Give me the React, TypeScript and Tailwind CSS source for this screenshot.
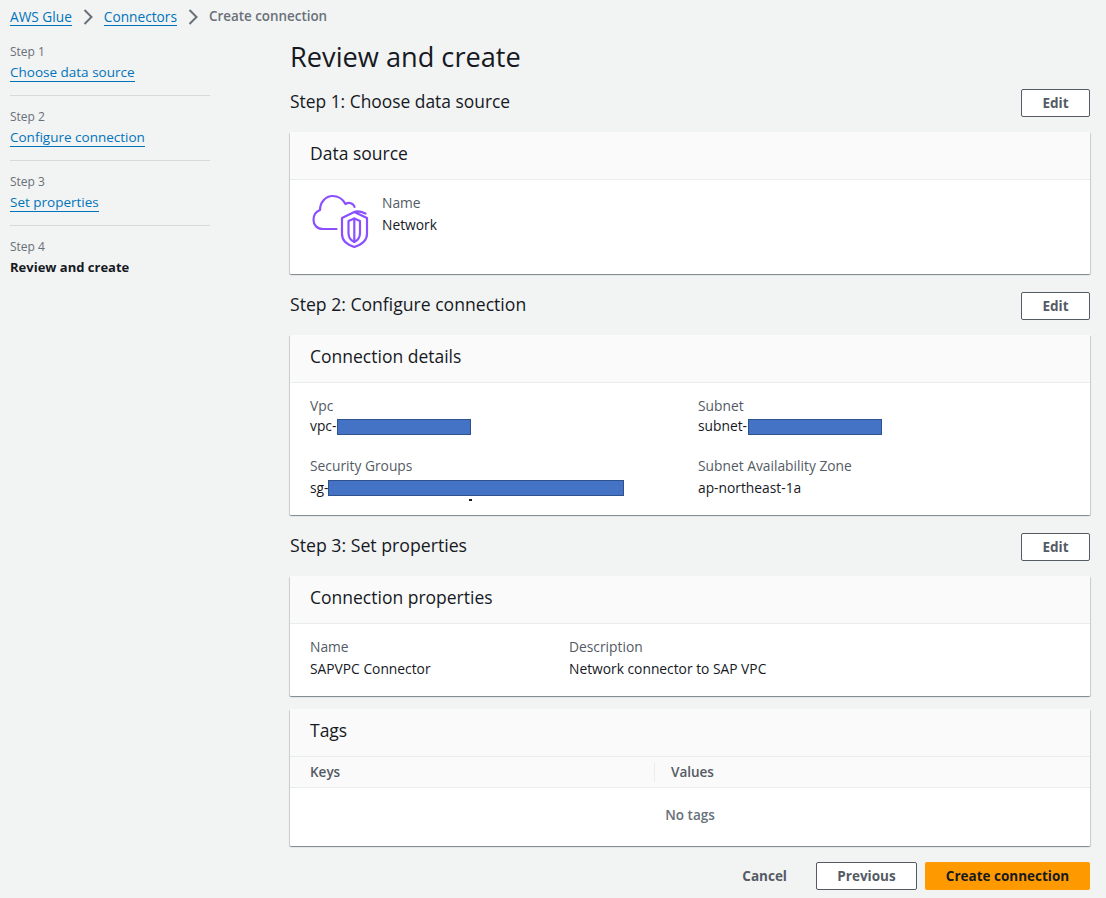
import React from 'react';

const steps = [
    { label: 'Step 1', title: 'Choose data source' },
    { label: 'Step 2', title: 'Configure connection' },
    { label: 'Step 3', title: 'Set properties' },
];

const Card: React.FC<{ title: string; children: React.ReactNode; className?: string }> = ({ title, children, className }) => (
    <div className={`bg-white rounded-[1px] shadow-[0_1px_1px_0_rgba(0,28,36,0.3),1px_1px_1px_0_rgba(0,28,36,0.15),-1px_1px_1px_0_rgba(0,28,36,0.15)] ${className}`}>
        <div className="h-12 flex items-center px-5 pb-[4px] bg-[#fafafa] border-b border-[#eaeded] text-[17.5px] text-[#16191f]">{title}</div>
        {children}
    </div>
);

const SectionHead: React.FC<{ title: string; className?: string }> = ({ title, className }) => (
    <div className="h-7 flex items-center justify-between">
        <h2 className={`text-[#16191f] pb-[3px] ${className}`}>{title}</h2>
        <button className="w-[69px] h-7 bg-white border border-[#545b64] rounded-[2px] text-[13.500px] font-bold text-[#545b64]">Edit</button>
    </div>
);

const Field: React.FC<{ label: string; value: string; mask?: number; maskClass?: string; className?: string }> = ({ label, value, mask, maskClass, className }) => (
    <div className={className}>
        <div className="text-[13.800px] leading-[20px] text-[#545b64]">{label}</div>
        <div className="text-[13.800px] leading-[20px] text-[#16191f] flex items-center">
            {value}
            {mask && <span className={`h-[16px] bg-[#4472c4] border border-[#2f528f] ${maskClass}`} style={{ width: mask }} />}
        </div>
    </div>
);

const Chevron = () => (
    <svg width="10" height="16" viewBox="0 0 10 16" fill="none" stroke="#687078" strokeWidth="2" className="mx-[11px]">
        <path d="M1.500 1L8.500 8L1.500 15" />
    </svg>
);

const NetworkIcon = () => (
    <svg width="60" height="60" viewBox="0 0 60 60" fill="none" stroke="#8c4fff" strokeWidth="2.200" strokeLinecap="round" strokeLinejoin="round" className="-ml-[1px] -mt-[1px]">
        <path d="M27.500 41H14C8 41 4.500 37 4.500 32C4.500 27 7 23.500 11 22C11 14 17 8 23.500 8C29 8 34 11.500 36.500 16C39 14.500 42 15 44 16.500C45 17.500 45.500 18.500 45.500 19" />
        <path d="M56.500 25.500C52 23.500 48 23 45.300 24L33 30V46C33 53 39 57 45.300 59C51.500 57 58 53 58 46V30L45.300 24" />
        <path d="M39.500 33L45.300 30.500L51 33V45C51 50 48.500 52.500 45.300 54C42 52.500 39.500 50 39.500 45Z" />
        <path d="M45.300 30.500V54" />
    </svg>
);

export default function App() {
    return (
        <div className="min-h-[898px] bg-[#f2f3f3] font-['Open_Sans',sans-serif] overflow-hidden">
            <nav className="h-8 pl-[10px] pt-[1px] flex items-center text-[13.700px]">
                <a className="text-[#0073bb] border-b border-[#0073bb] leading-[17px]">AWS Glue</a>
                <Chevron />
                <a className="text-[#0073bb] border-b border-[#0073bb] leading-[17px]">Connectors</a>
                <Chevron />
                <span className="font-semibold text-[13.400px] text-[#687078]">Create connection</span>
            </nav>

            <div className="flex">
                <aside className="w-[200px] ml-[10px] mt-[12px] shrink-0">
                    {steps.map((s) => (
                        <div key={s.label} className="pb-[13px] border-b border-[#d5dbdb] mb-[13px]">
                            <div className="text-[12px] leading-[16px] text-[#687078]">{s.label}</div>
                            <div className="text-[13.500px] leading-[20px] mt-[2px]">
                                <a className="text-[#0073bb] border-b border-[#0073bb]">{s.title}</a>
                            </div>
                        </div>
                    ))}
                    <div>
                        <div className="text-[12px] leading-[16px] text-[#687078]">Step 4</div>
                        <div className="text-[13px] leading-[20px] font-bold text-[#16191f] mt-[2px]">Review and create</div>
                    </div>
                </aside>

                <main className="ml-[80px] w-[800px]">
                    <h1 className="text-[27.200px] leading-[36px] text-[#16191f] mt-[7px] mb-[14px]">Review and create</h1>

                    <SectionHead title="Step 1: Choose data source" className="text-[17.4px]" />
                    <Card title="Data source" className="mt-[15px] h-[142px]">
                        <div className="flex pl-5 pt-[9px]">
                            <NetworkIcon />
                            <Field label="Name" value="Network" className="ml-[13px] mt-[3px] [&>div]:leading-[22px]" />
                        </div>
                    </Card>

                    <div className="mt-[18px]">
                        <SectionHead title="Step 2: Configure connection" className="text-[17.6px]" />
                    </div>
                    <Card title="Connection details" className="mt-[15px] h-[180px]">
                        <div className="grid grid-cols-[388px_1fr] px-5 pt-[13px] gap-y-[20px]">
                            <Field label="Vpc" value="vpc-" mask={134} maskClass="mt-[2px] ml-[1px]" />
                            <Field label="Subnet" value="subnet-" mask={134} maskClass="mt-[2px] ml-[1px]" />
                            <div className="relative [&>div>div:last-child]:mt-[2px]">
                                <Field label="Security Groups" value="sg-" mask={296} maskClass="-ml-[1px]" />
                                <span className="absolute left-[159px] top-[43px] w-[3px] h-[2px] bg-[#16191f]" />
                            </div>
                            <Field label="Subnet Availability Zone" value="ap-northeast-1a" className="[&>div:last-child]:mt-[2px]" />
                        </div>
                    </Card>

                    <div className="mt-[18px]">
                        <SectionHead title="Step 3: Set properties" className="text-[17.7px]" />
                    </div>
                    <Card title="Connection properties" className="mt-[15px] h-[120px]">
                        <div className="flex px-5 pt-[12px]">
                            <Field label="Name" value="SAPVPC Connector" className="w-[259px] [&>div]:leading-[22px]" />
                            <Field label="Description" value="Network connector to SAP VPC" className="[&>div]:leading-[22px]" />
                        </div>
                    </Card>

                    <Card title="Tags" className="mt-[13px] h-[137px]">
                        <div className="h-[31px] flex items-center bg-[#fafafa] border-b border-[#eaeded] text-[13.500px] font-semibold text-[#545b64]">
                            <div className="w-[365px] pl-5 h-[19px] border-r border-[#eaeded]">
                                <span className="leading-[19px] block">Keys</span>
                            </div>
                            <div className="pl-4">Values</div>
                        </div>
                        <div className="h-[55px] flex items-center justify-center text-[13.500px] font-semibold text-[#687078]">No tags</div>
                    </Card>

                    <div className="mt-[16px] flex items-center justify-end">
                        <button className="text-[13.500px] font-bold text-[#545b64] mr-[29px]">Cancel</button>
                        <button className="w-[101px] h-7 bg-white border border-[#545b64] rounded-[2px] text-[13.500px] font-bold text-[#545b64] mr-2">Previous</button>
                        <button className="w-[165px] h-7 bg-[#ff9900] rounded-[2px] text-[13.500px] font-bold text-[#16191f]">Create connection</button>
                    </div>
                </main>
            </div>
        </div>
    );
}
